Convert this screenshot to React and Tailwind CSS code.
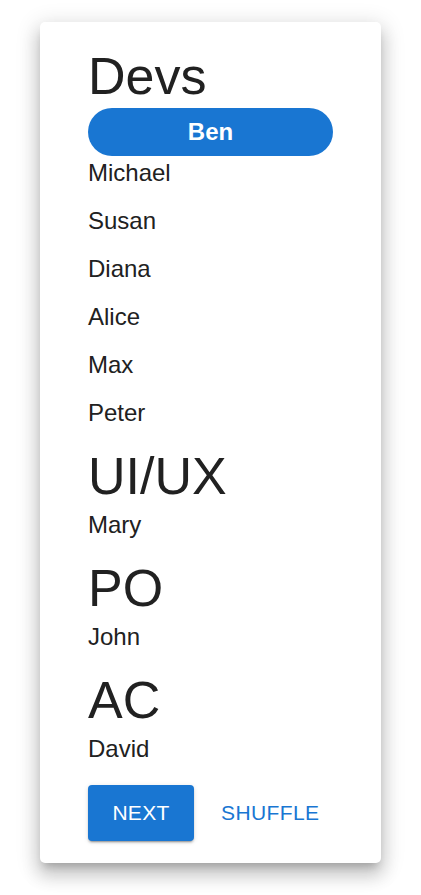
const teams = [
  { name: "Devs", members: ["Ben", "Michael", "Susan", "Diana", "Alice", "Max", "Peter"] },
  { name: "UI/UX", members: ["Mary"] },
  { name: "PO", members: ["John"] },
  { name: "AC", members: ["David"] },
];

const current = "Ben";

const App = () => {
  return (
    <div className="min-h-screen bg-white font-['Liberation_Sans',Arial,sans-serif] text-[#212121]">
      <div className="mx-10 mt-[22px] rounded-[5px] bg-white px-12 pt-[26px] pb-[22px] shadow-[0_7px_8px_-4px_rgba(0,0,0,0.2),0_12px_17px_2px_rgba(0,0,0,0.14),0_5px_22px_4px_rgba(0,0,0,0.12)]">
        <div className="flex flex-col gap-1">
          {teams.map((team) => (
            <div key={team.name} className="flex flex-col gap-1">
              <h3 className="text-[52px] leading-[56px]">{team.name}</h3>
              <ul>
                {team.members.map((member) =>
                  member === current ? (
                    <li
                      key={member}
                      className="flex h-12 items-center justify-center rounded-full bg-[#1976d2] text-[24px] font-bold text-white"
                    >
                      {member}
                    </li>
                  ) : (
                    <li key={member} className="h-12 pt-px text-[24px] leading-8">
                      {member}
                    </li>
                  )
                )}
              </ul>
            </div>
          ))}
        </div>

        <div className="mt-[5px] flex items-center gap-[14px]">
          <button className="h-14 w-[106px] rounded-[4px] bg-[#1976d2] text-[21px] tracking-[0.3px] text-white shadow-[0_3px_1px_-2px_rgba(0,0,0,0.2),0_2px_2px_0_rgba(0,0,0,0.14),0_1px_5px_0_rgba(0,0,0,0.12)]">
            NEXT
          </button>
          <button className="h-14 px-[13px] text-[21px] tracking-[0.4px] text-[#1976d2]">
            SHUFFLE
          </button>
        </div>
      </div>
    </div>
  );
};

export default App;
